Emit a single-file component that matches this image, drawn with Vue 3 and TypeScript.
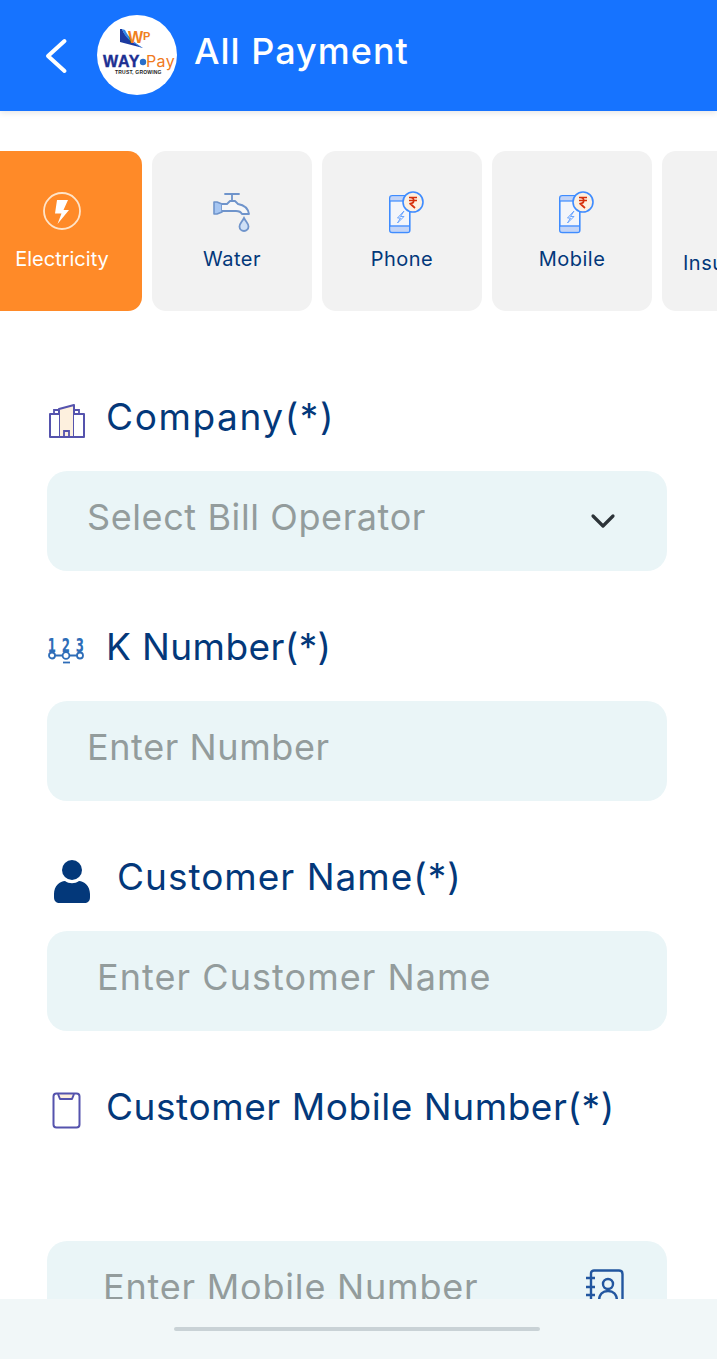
<script setup lang="ts">
const chips = [
  { key: 'electricity', label: 'Electricity', active: true },
  { key: 'water', label: 'Water', active: false },
  { key: 'phone', label: 'Phone', active: false },
  { key: 'mobile', label: 'Mobile', active: false },
  { key: 'insurance', label: 'Insurance', active: false },
]
</script>

<template>
  <div class="page">
    <header class="header">
      <svg class="back" width="26" height="38" viewBox="0 0 26 38" fill="none">
        <path d="M20.5 4 L4 19 L20.5 34" stroke="#fff" stroke-width="4" stroke-linecap="round" stroke-linejoin="round" />
      </svg>
      <div class="logo">
        <svg width="80" height="80" viewBox="0 0 80 80">
          <path d="M23 14 L23 27 L46 33 C36 28 28 22 25 14 Z" fill="#1c3aa0" />
          <path d="M25 14 L28 15 C31 22 38 28 46 33 C36 29 28 23 25 14 Z" fill="#2f86e8" />
          <text x="31" y="28" class="lw">W</text>
          <text x="46" y="25" class="lp">P</text>
          <text x="6" y="52" class="lway">WAY</text>
          <circle cx="46" cy="47" r="3.2" fill="#2a6fc9" />
          <text x="49" y="52" class="lpay">Pay</text>
          <text x="18" y="59" class="ltag">TRUST, GROWING</text>
        </svg>
      </div>
      <h1 class="title">All Payment</h1>
    </header>

    <nav class="chips">
      <div v-for="c in chips" :key="c.key" class="chip" :class="{ active: c.active, ins: c.key === 'insurance' }">
        <svg v-if="c.key === 'electricity'" class="ico" width="40" height="44" viewBox="0 0 40 44">
          <circle cx="20" cy="20" r="18" fill="none" stroke="#ffe4c8" stroke-width="1.8" />
          <path d="M15 9 H26 L21.5 19 H27 L15.5 33 L19.5 22.5 H13 Z" fill="#fff" />
        </svg>
        <svg v-else-if="c.key === 'water'" class="ico" width="40" height="44" viewBox="0 0 40 44" fill="none">
          <path d="M2 11 H5 L10 13 V21 L5 23 H2 Z" fill="#a6c6f2" stroke="#6f94cb" stroke-width="1.6" stroke-linejoin="round" />
          <path d="M10 13 H15 L18 10 H23 L26 13 C32 14 36 17 37 23 H30 C29 21 27 20 24 20 H10" fill="#f6f7f8" stroke="#6f94cb" stroke-width="1.8" stroke-linejoin="round" />
          <path d="M20 10 V3 M13 3 H27" stroke="#6f94cb" stroke-width="1.8" stroke-linecap="round" />
          <path d="M32 27 C30 31 27.5 32.5 27.5 35.5 A4.5 4.5 0 0 0 36.5 35.5 C36.5 32.5 34 31 32 27 Z" fill="#cfe0f6" stroke="#6f94cb" stroke-width="1.8" />
        </svg>
        <svg v-else-if="c.key === 'phone' || c.key === 'mobile'" class="ico" width="40" height="44" viewBox="0 0 40 44" fill="none">
          <rect x="7.8" y="4.8" width="20" height="36.6" rx="2.5" fill="#f3f5fa" stroke="#3f8cff" stroke-width="1.6" />
          <path d="M8.6 5.6 H27 V10 H8.6 Z M8.6 35.5 H27 V40.6 H8.6 Z" fill="#c3d4f6" />
          <path d="M8 35 H27.6" stroke="#3f8cff" stroke-width="1.4" />
          <path d="M8 10 H22" stroke="#3f8cff" stroke-width="1.2" />
          <path d="M22 20 L15.5 27 H18.5 L15.5 32 L22 25.5 H18.5 Z" fill="none" stroke="#6aa4ff" stroke-width="1" stroke-linejoin="round" />
          <circle cx="31" cy="11" r="10" fill="#fdf0e0" stroke="#3f8cff" stroke-width="1.6" />
          <path d="M27 6.5 H35 M27 9.5 H35 M28 6.5 C33 6.5 33 12.5 28 12.5 L33 17" stroke="#d62f0a" stroke-width="1.7" fill="none" stroke-linejoin="round" />
        </svg>
        <span class="chip-label">{{ c.label }}</span>
      </div>
    </nav>

    <main class="form">
      <section class="group">
        <label class="lab ls-company">
          <svg class="lab-ico" width="38" height="34" viewBox="0 0 38 34" fill="none">
            <path d="M11 5 V33 H26 V1 Z" fill="#fdf0de" stroke="#5553ad" stroke-width="2" stroke-linejoin="round" />
            <path d="M11 10 H2 V33 H11 M26 10 H36 V33 H26" stroke="#5553ad" stroke-width="2" fill="#fff" stroke-linejoin="round" />
            <path d="M6 10 V6 H11 M31 10 V6 H26 M16 33 V27 H21 V33" stroke="#5553ad" stroke-width="1.8" />
          </svg>
          <span>Company(*)</span>
        </label>
        <div class="field select">
          <span>Select Bill Operator</span>
          <svg width="26" height="16" viewBox="0 0 26 16" fill="none">
            <path d="M3 3 L13 13 L23 3" stroke="#2c3338" stroke-width="3.2" stroke-linecap="round" stroke-linejoin="round" />
          </svg>
        </div>
      </section>

      <section class="group">
        <label class="lab ls-k">
          <svg class="lab-ico" width="38" height="28" viewBox="0 0 38 28" fill="none">
            <text transform="translate(4 15) scale(0.62 1)" text-anchor="middle" class="nums">1</text>
            <text transform="translate(18 15) scale(0.62 1)" text-anchor="middle" class="nums">2</text>
            <text transform="translate(32 15) scale(0.62 1)" text-anchor="middle" class="nums">3</text>
            <path d="M7 18.5 H14.6 M21.4 18.5 H29" stroke="#2e6db8" stroke-width="1.8" />
            <circle cx="4" cy="18.5" r="3" fill="none" stroke="#2e6db8" stroke-width="1.8" />
            <circle cx="18" cy="18.5" r="3.4" fill="none" stroke="#2e6db8" stroke-width="1.8" />
            <circle cx="32" cy="18.5" r="3" fill="none" stroke="#2e6db8" stroke-width="1.8" />
            <path d="M15 25.5 H22" stroke="#2e6db8" stroke-width="1.8" />
          </svg>
          <span>K Number(*)</span>
        </label>
        <div class="field num"><span>Enter Number</span></div>
      </section>

      <section class="group">
        <label class="lab lab-wide ls-name">
          <svg class="lab-ico" width="36" height="44" viewBox="0 0 36 44">
            <circle cx="18" cy="10" r="10" fill="#03387a" />
            <path d="M0 34 C0 26 6 21 11 21 C15 24 21 24 25 21 C30 21 36 26 36 34 V37 C36 41 34 43 30 43 H6 C2 43 0 41 0 37 Z" fill="#03387a" />
          </svg>
          <span>Customer Name(*)</span>
        </label>
        <div class="field field-wide"><span>Enter Customer Name</span></div>
      </section>

      <section class="group">
        <label class="lab ls-mobile">
          <svg class="lab-ico" width="38" height="38" viewBox="0 0 38 38" fill="none">
            <path d="M10 2 L12 7 H24 L26 2 Z" fill="#fdeedd" />
            <rect x="5.5" y="1.5" width="26" height="34" rx="3" stroke="#5553ad" stroke-width="2" />
            <path d="M10 2 L12 7 H24 L26 2" stroke="#5553ad" stroke-width="2" stroke-linejoin="round" />
          </svg>
          <span>Customer Mobile Number(*)</span>
        </label>
        <div class="field field-mobile">
          <span>Enter Mobile Number</span>
          <svg class="contact" width="40" height="44" viewBox="0 0 40 44" fill="none">
            <path d="M6 4 C6 2.5 7.5 1.5 9 1.5 H34 C36 1.5 37.5 3 37.5 5 V40 C37.5 42 36 43 34 43 H9 C7.5 43 6 42 6 40 Z" stroke="#22569f" stroke-width="2.4" />
            <path d="M1 9 H10 M1 18 H10 M1 26 H10" stroke="#22569f" stroke-width="2.4" />
            <circle cx="23" cy="15" r="5" stroke="#22569f" stroke-width="2.4" />
            <path d="M14 32 C14 25 18 22 23 22 C28 22 32 25 32 32 Z" stroke="#22569f" stroke-width="2.4" />
          </svg>
        </div>
      </section>
    </main>

    <div class="navbar"><i class="handle"></i></div>
  </div>
</template>

<style>
html, body { margin: 0; background: #fff; }
</style>

<style scoped>
.page {
  position: relative;
  width: 717px;
  height: 1359px;
  overflow: hidden;
  background: #fff;
  font-family: Inter, "Open Sans", "Liberation Sans", sans-serif;
}
.header {
  height: 111px;
  background: #1673ff;
  display: flex;
  align-items: center;
  padding-left: 44px;
  box-shadow: 0 2px 6px rgba(0, 0, 0, 0.1);
}
.back { margin-right: 27px; }
.logo {
  width: 80px;
  height: 80px;
  border-radius: 50%;
  background: #fff;
  overflow: hidden;
  margin-right: 17px;
  margin-bottom: 1px;
}
.logo svg { display: block; }
.lw { font: 900 16px "Liberation Sans", sans-serif; fill: #f08020; }
.lp { font: 700 11px "Liberation Sans", sans-serif; fill: #f08020; }
.lway { font: 900 16px "Liberation Sans", sans-serif; fill: #1c2f92; letter-spacing: 0.7px; stroke: #1c2f92; stroke-width: 0.4px; }
.lpay { font: 400 16px Inter, sans-serif; fill: #f07a1c; letter-spacing: 0.4px; }
.ltag { font: 700 5px "Liberation Sans", sans-serif; fill: #222; letter-spacing: 0.2px; }
.title {
  margin: 0 0 9px;
  color: #fff;
  font-size: 36px;
  font-weight: 500;
  letter-spacing: 1px;
  white-space: nowrap;
}
.chips {
  display: flex;
  gap: 10px;
  margin: 40px 0 0 -18px;
  width: 900px;
}
.chip {
  width: 160px;
  height: 160px;
  flex: none;
  border-radius: 14px;
  background: #f2f2f2;
  color: #03387a;
  display: flex;
  flex-direction: column;
  align-items: center;
  box-sizing: border-box;
  padding-top: 40px;
}
.chip.active { background: #ff8a28; color: #fff; }
.ico { display: block; overflow: visible; }
.chip-label {
  margin-top: 10px;
  font-size: 20px;
  line-height: 28px;
  letter-spacing: 0.5px;
  white-space: nowrap;
}
.chip.active .chip-label { letter-spacing: 0; }
.chip.ins { align-items: flex-start; padding-left: 21px; }
.chip.ins .chip-label { margin-top: 58px; }
.form { padding: 81px 50px 0 47px; }
.group { margin-bottom: 51px; }
.lab {
  display: flex;
  align-items: center;
  height: 50px;
  margin-bottom: 29px;
  color: #03387a;
  font-size: 37px;
  line-height: 50px;
  white-space: nowrap;
}
.ls-company { letter-spacing: 1.6px; }
.ls-k { letter-spacing: 0.4px; }
.ls-name { letter-spacing: 1px; }
.ls-mobile { letter-spacing: 0.56px; }
.lab-ico { flex: none; margin: 7px 20px 0 1px; overflow: visible; }
.lab-wide .lab-ico { margin: 9px 27px 0 7px; }
.nums { font: 700 19px "DejaVu Sans", sans-serif; fill: #2e6db8; }
.field {
  height: 100px;
  box-sizing: border-box;
  background: #eaf5f7;
  border-radius: 20px;
  display: flex;
  align-items: center;
  justify-content: space-between;
  padding: 0 51px 0 40px;
  color: #939c9c;
  font-size: 36px;
  white-space: nowrap;
}
.field > span { margin-top: -8px; }
.select, .num { letter-spacing: 0.6px; }
.field-wide { padding-left: 50px; letter-spacing: 1.05px; }
.field-mobile {
  margin-top: 109px;
  padding: 0 42px 0 56px;
  letter-spacing: 0.8px;
}
.navbar {
  position: absolute;
  left: 0;
  right: 0;
  bottom: 0;
  height: 60px;
  background: #f1f7f8;
  display: flex;
  align-items: center;
  justify-content: center;
}
.handle {
  display: block;
  width: 366px;
  height: 4px;
  margin-right: 4px;
  background: #c9d2d6;
  border-radius: 2px;
}
</style>
